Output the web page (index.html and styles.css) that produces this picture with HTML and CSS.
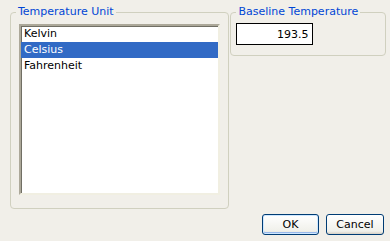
FILE: index.html
```html
<!DOCTYPE html>
<html lang="en">
<head>
  <meta charset="UTF-8" />
  <title>Temperature Unit</title>
  <link rel="stylesheet" href="styles.css">
</head>
<body>

  <div class="panels">
    <!-- Lista de unidades -->
    <fieldset class="group group-unit">
      <legend>Temperature Unit</legend>
      <ul class="listbox">
        <li>Kelvin</li>
        <li class="selected">Celsius</li>
        <li>Fahrenheit</li>
      </ul>
    </fieldset>

    <!-- Temperatura base -->
    <fieldset class="group group-baseline">
      <legend>Baseline Temperature</legend>
      <input class="textfield" type="text" value="193.5">
    </fieldset>
  </div>

  <div class="buttons">
    <button class="btn btn-default">OK</button>
    <button class="btn">Cancel</button>
  </div>

</body>
</html>
```

FILE: styles.css
```css
body {
  margin: 0;
  padding: 5px 4px 0 10px;
  background: #f1efe9;
  font-family: 'DejaVu Sans', 'Liberation Sans', sans-serif;
  font-size: 11px;
  color: #000;
  width: 390px;
  height: 241px;
  box-sizing: border-box;
}

.panels {
  display: flex;
  align-items: flex-start;
  gap: 1px;
}

.group {
  margin: 0;
  border: 1px solid #d0d0bf;
  border-radius: 4px;
  box-sizing: border-box;
}

.group legend {
  color: #0046d5;
  line-height: 14px;
  padding: 0 2px;
}

.group-unit {
  width: 220px;
  height: 204px;
  padding: 5px 8px 12px 8px;
}

.group-unit legend {
  margin-left: -3px;
}

.group-baseline {
  width: 156px;
  height: 51px;
  padding: 4px 5px 0 5px;
}

.listbox {
  list-style: none;
  margin: 0;
  padding: 0;
  height: 171px;
  background: #fff;
  border-top: 2px solid #aca899;
  border-left: 2px solid #aca899;
  border-right: 2px solid #f1efe2;
  border-bottom: 2px solid #f1efe2;
  box-shadow: inset 1px 1px 0 #716f64;
  box-sizing: border-box;
}

.listbox li {
  height: 16px;
  line-height: 16px;
  padding-left: 3px;
}

.listbox li.selected {
  background: #316ac5;
  color: #fff;
}

.textfield {
  display: block;
  width: 77px;
  height: 22px;
  margin: 0;
  padding: 0 4px 0 0;
  border: 1px solid #000;
  background: #fff;
  font: inherit;
  text-align: right;
  box-sizing: border-box;
}

.buttons {
  display: flex;
  justify-content: flex-end;
  gap: 7px;
  margin-top: 5px;
  padding-right: 2px;
}

.btn {
  width: 58px;
  height: 21px;
  padding: 0;
  font: inherit;
  color: #000;
  border: 1px solid #003c74;
  border-radius: 3px;
  background: linear-gradient(#ffffff, #f0f0ea 85%, #d6d0c5);
}

.btn-default {
  width: 57px;
  box-shadow: inset 0 0 0 1px #cee7ff, inset 0 -1px 0 1px #98b8ea;
}
```
